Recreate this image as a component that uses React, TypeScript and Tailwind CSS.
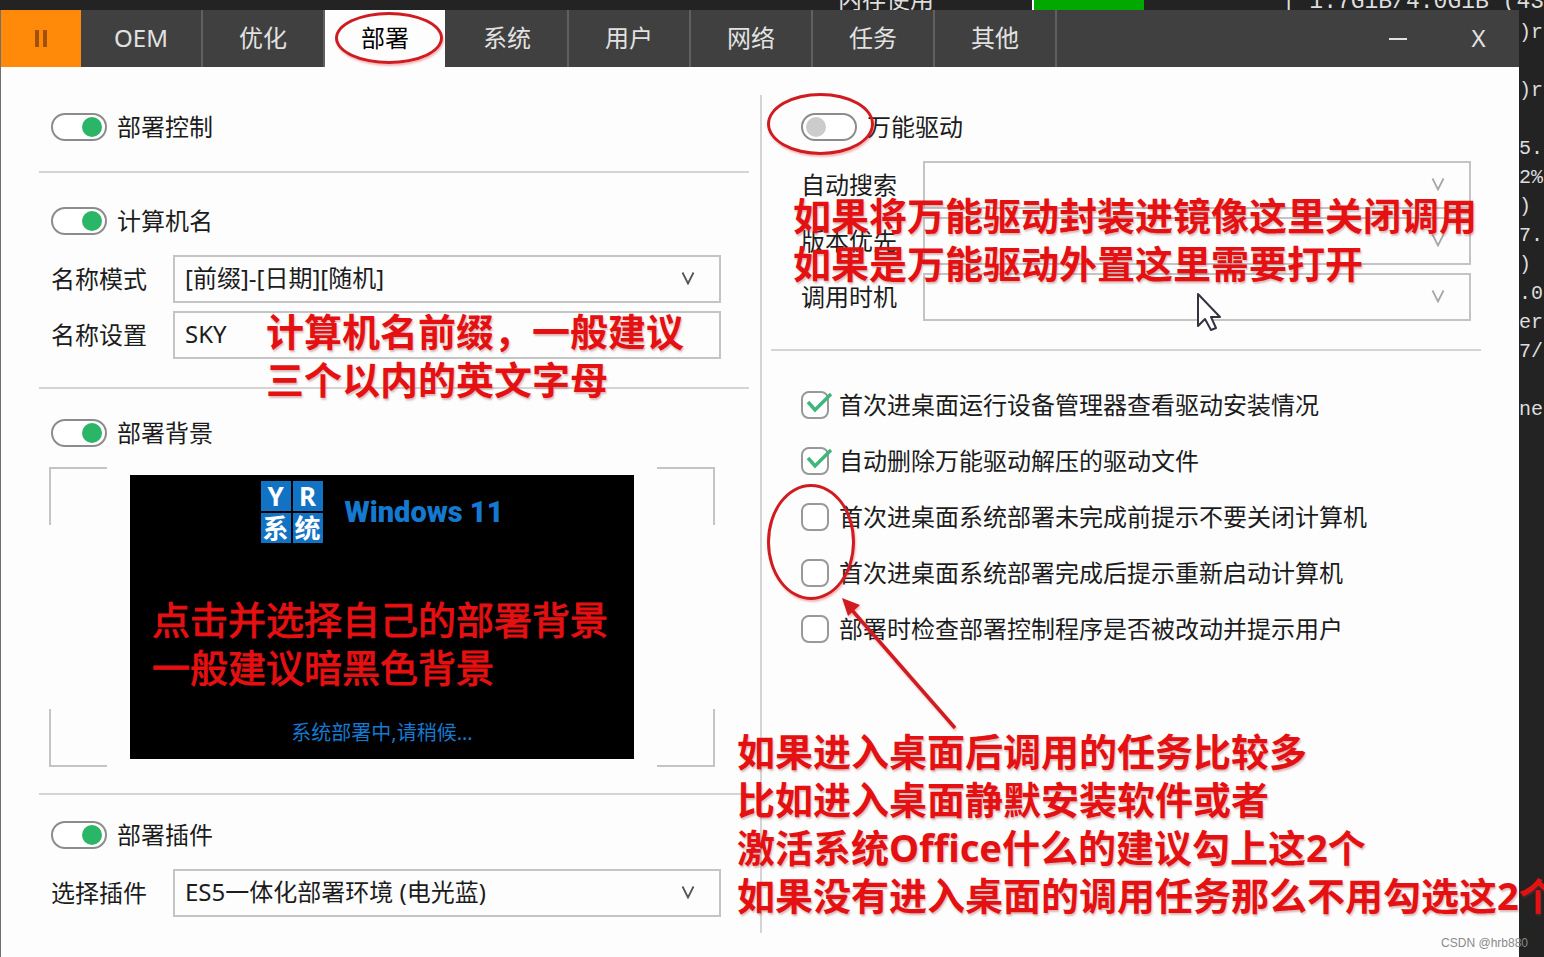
import type { ReactNode } from "react"

const tabs = ["OEM", "优化", "部署", "系统", "用户", "网络", "任务", "其他"]

const terminalLines = [")r", "", ")r", "", "5.", "2%", ")", "7.", ")", ".0", "er", "7/", "", "ne"]

const options = [
  { id: "device-manager", label: "首次进桌面运行设备管理器查看驱动安装情况", checked: true },
  { id: "remove-drivers", label: "自动删除万能驱动解压的驱动文件", checked: true },
  { id: "warn-shutdown", label: "首次进桌面系统部署未完成前提示不要关闭计算机", checked: false },
  { id: "prompt-restart", label: "首次进桌面系统部署完成后提示重新启动计算机", checked: false },
  { id: "verify-program", label: "部署时检查部署控制程序是否被改动并提示用户", checked: false },
]

function Toggle({ id, label, on = false }: { id: string; label: string; on?: boolean }) {
  return (
    <div className="flex h-9 items-center gap-2.5 pl-3">
      <input
        id={id}
        type="checkbox"
        role="switch"
        defaultChecked={on}
        className="flex h-7 w-14 shrink-0 appearance-none items-center rounded-full border-2 border-[#8c8c8c] bg-white px-[3px] before:size-5 before:rounded-full before:bg-[#cccccc] before:content-[''] checked:justify-end checked:before:bg-[#2bb566]"
      />
      <label htmlFor={id}>{label}</label>
    </div>
  )
}

function Field({ id, label, children }: { id: string; label: string; children: ReactNode }) {
  return (
    <div className="flex h-12 items-center pl-3">
      <label htmlFor={id} className="w-[122px] shrink-0">
        {label}
      </label>
      {children}
    </div>
  )
}

function SelectBox({ id, value, disabled = false }: { id: string; value?: string; disabled?: boolean }) {
  return (
    <div className="relative h-12 min-w-0 flex-1">
      <select
        id={id}
        disabled={disabled}
        className="h-full w-full appearance-none border-2 border-[#c4c4c4] bg-[#fdfdfd] px-2.5 pb-0.5"
      >
        <option>{value}</option>
      </select>
      <svg
        viewBox="0 0 14 14"
        className={`pointer-events-none absolute top-4 right-6.5 size-3.5 ${disabled ? "text-[#a8a8a8]" : "text-[#555555]"}`}
      >
        <path d="M1.5 1.5 7 12.5 12.5 1.5" fill="none" stroke="currentColor" strokeWidth="1.8" />
      </svg>
    </div>
  )
}

function Note({ className, children }: { className: string; children: ReactNode }) {
  return (
    <p className={`pointer-events-none absolute z-20 text-[38px] leading-12 whitespace-nowrap text-[#e41012] ${className}`}>
      {children}
    </p>
  )
}

/* Hand-drawn style ring around a control */
function Ring({ className }: { className: string }) {
  return (
    <span
      className={`pointer-events-none absolute z-20 rounded-[50%] border-[3px] border-[#d01c20] shadow-[1px_2px_2px_rgba(220,60,60,0.35)] ${className}`}
    />
  )
}

function TitleBar() {
  return (
    <header className="flex h-[57px] bg-[#404040] text-[#e2e2e2]">
      <button type="button" aria-label="暂停" className="flex w-20 items-center justify-center bg-[#ff8a0a]">
        <svg viewBox="0 0 12 17" className="h-[17px] w-3">
          <path d="M0 0h4v17H0zM8 0h4v17H8z" fill="#a3500c" />
        </svg>
      </button>
      <nav className="flex">
        {tabs.map((tab) => {
          const active = tab === "部署"
          return (
            <button
              key={tab}
              type="button"
              className={`relative w-[122px] border-r-2 pb-0.5 ${active ? "border-[#404040] bg-[#fdfdfd] text-black" : "border-[#606060]"}`}
            >
              {tab}
              {active && <Ring className="top-0.5 left-2.5 h-[52px] w-[108px]" />}
            </button>
          )
        })}
      </nav>
      <div className="ml-auto flex">
        <button type="button" aria-label="最小化" className="flex w-[81px] items-center justify-center">
          <span className="h-0.5 w-[18px] bg-[#e2e2e2]" />
        </button>
        <button type="button" aria-label="关闭" className="w-[81px] pb-0.5">
          X
        </button>
      </div>
    </header>
  )
}

function Preview() {
  return (
    <div className="relative mr-[34px] ml-2.5 flex h-[300px] items-center justify-center">
      <span className="absolute top-0 left-0 size-[58px] border-t-2 border-l-2 border-[#c4c4c4]" />
      <span className="absolute top-0 right-0 size-[58px] border-t-2 border-r-2 border-[#c4c4c4]" />
      <span className="absolute bottom-0 left-0 size-[58px] border-b-2 border-l-2 border-[#c4c4c4]" />
      <span className="absolute right-0 bottom-0 size-[58px] border-r-2 border-b-2 border-[#c4c4c4]" />

      <div className="relative flex h-[284px] w-[504px] flex-col items-center bg-black pt-1.5 pb-3 text-[#1479cf]">
        <div className="flex items-center gap-5.5">
          <div className="grid grid-cols-2 gap-0.5 text-center text-[26px] leading-[30px] font-bold text-white">
            {["Y", "R", "系", "统"].map((char) => (
              <span key={char} className="size-[30px] bg-[#1272c4]">
                {char}
              </span>
            ))}
          </div>
          <span className="font-[Roboto,sans-serif] text-[29px] leading-9 font-black">Windows 11</span>
        </div>
        <p className="mt-auto text-[20px] leading-7">系统部署中,请稍候...</p>
        <Note className="top-[120px] left-[22px] [-webkit-text-stroke:1px_#e41012]">
          点击并选择自己的部署背景
          <br />
          一般建议暗黑色背景
        </Note>
      </div>
    </div>
  )
}

export default function App() {
  return (
    <div className="relative flex min-h-screen flex-col overflow-hidden bg-[#232323] font-['Noto_Sans','Noto_Sans_CJK_SC',sans-serif] text-[24px] leading-9 text-[#1c1c1c]">
      {/* Console behind the window, only its last line shows */}
      <div className="flex h-2.5 items-end overflow-hidden pl-[838px] font-['Liberation_Mono','Noto_Sans_CJK_SC',monospace] text-[23px] leading-4 whitespace-pre text-[#dddddd]">
        <span className="w-[196px] text-[24px]">内存使用</span>
        <span className="h-full w-[113px] border-l-2 border-white bg-[#00a800]" />
        <span className="pl-[138px]">| 1.7GiB/4.0GiB (43</span>
      </div>

      <div className="flex flex-1">
        <div className="flex min-w-0 flex-1 flex-col border-l border-[#707070] bg-[#fdfdfd]">
          <TitleBar />

          <main className="grid flex-1 grid-cols-2 pt-7 pb-6">
            <div className="pr-[11px] pl-[38px]">
              <section className="border-b-2 border-[#d4d4d4] pt-3.5 pb-6.5">
                <Toggle id="deploy-control" label="部署控制" on />
              </section>

              <section className="relative border-b-2 border-[#d4d4d4] pt-7.5 pb-7">
                <Toggle id="computer-name" label="计算机名" on />
                <div className="mt-4 flex flex-col gap-2 pr-7">
                  <Field id="name-mode" label="名称模式">
                    <SelectBox id="name-mode" value="[前缀]-[日期][随机]" />
                  </Field>
                  <Field id="name-prefix" label="名称设置">
                    <input
                      id="name-prefix"
                      type="text"
                      defaultValue="SKY"
                      className="h-12 min-w-0 flex-1 border-2 border-[#c4c4c4] bg-[#fdfdfd] px-2.5 pb-1"
                    />
                  </Field>
                </div>
                <Note className="top-[134px] left-[227px] font-bold text-shadow-[1px_2px_2px_rgba(150,60,60,0.35)]">
                  计算机名前缀，一般建议
                  <br />
                  三个以内的英文字母
                </Note>
              </section>

              <section className="border-b-2 border-[#d4d4d4] pt-6.5 pb-6.5">
                <Toggle id="deploy-background" label="部署背景" on />
                <div className="mt-4">
                  <Preview />
                </div>
              </section>

              <section className="pt-5.5">
                <Toggle id="deploy-plugin" label="部署插件" on />
                <div className="mt-4 pr-7">
                  <Field id="plugin" label="选择插件">
                    <SelectBox id="plugin" value="ES5一体化部署环境 (电光蓝)" />
                  </Field>
                </div>
              </section>
            </div>

            <div className="border-l-2 border-[#d4d4d4] pr-[38px] pl-[9px]">
              <section className="relative border-b-2 border-[#d4d4d4] pt-3.5 pb-7 pl-[18px]">
                <Toggle id="universal-driver" label="万能驱动" />
                <div className="mt-4 flex flex-col gap-2 pr-2.5">
                  <Field id="auto-search" label="自动搜索">
                    <SelectBox id="auto-search" disabled />
                  </Field>
                  <Field id="version-first" label="版本优先">
                    <SelectBox id="version-first" disabled />
                  </Field>
                  <Field id="call-timing" label="调用时机">
                    <SelectBox id="call-timing" disabled />
                  </Field>
                </div>

                <Ring className="-top-0.5 -left-1 h-[62px] w-[107px]" />
                <Note className="top-24 left-[22px] font-bold text-shadow-[1px_2px_2px_rgba(150,60,60,0.35)]">
                  如果将万能驱动封装进镜像这里关闭调用
                  <br />
                  如果是万能驱动外置这里需要打开
                </Note>
                <svg viewBox="0 0 26 40" className="absolute top-[197px] left-[425px] h-10 w-[26px]">
                  <path
                    d="M2 2v32l7-7 6 11 5-2-5-11h9z"
                    fill="#ffffff"
                    stroke="#333340"
                    strokeWidth="2"
                    strokeLinejoin="round"
                  />
                </svg>
              </section>

              <section className="relative flex flex-col gap-5 pt-9 pl-[30px]">
                {options.map((option) => (
                  <div key={option.id} className="relative flex h-9 items-center gap-2.5 whitespace-nowrap">
                    <input
                      id={option.id}
                      type="checkbox"
                      defaultChecked={option.checked}
                      className="peer size-7 shrink-0 appearance-none rounded-lg border-2 border-[#999999] bg-white"
                    />
                    <svg
                      viewBox="0 0 36 36"
                      className="pointer-events-none absolute top-0 left-0 hidden size-9 peer-checked:block"
                    >
                      <path d="M7 15l7 8L30 7" fill="none" stroke="#3fb67b" strokeWidth="3.5" />
                    </svg>
                    <label htmlFor={option.id}>{option.label}</label>
                  </div>
                ))}

                <Ring className="top-[133px] -left-1 h-[116px] w-[88px]" />
                <svg
                  viewBox="0 0 124 140"
                  className="pointer-events-none absolute top-[244px] left-[68px] z-20 h-[140px] w-[124px] drop-shadow-[1px_2px_1px_rgba(220,60,60,0.35)]"
                >
                  <path d="M12 14 116 133" stroke="#d01c20" strokeWidth="3.5" />
                  <path d="M3 3l18 7-12 11z" fill="#d01c20" />
                </svg>
                <Note className="top-[376px] -left-[34px] font-bold text-shadow-[1px_2px_2px_rgba(150,60,60,0.35)]">
                  如果进入桌面后调用的任务比较多
                  <br />
                  比如进入桌面静默安装软件或者
                  <br />
                  激活系统Office什么的建议勾上这2个
                  <br />
                  如果没有进入桌面的调用任务那么不用勾选这2个
                </Note>
              </section>
            </div>
          </main>
        </div>

        <aside className="w-[25px] pt-2 font-['Liberation_Mono',monospace] text-[20px] leading-[29px] text-[#dddddd]">
          {terminalLines.map((line, i) => (
            <div key={i} className="h-[29px] whitespace-pre">
              {line}
            </div>
          ))}
        </aside>
      </div>

      <span className="absolute right-4 bottom-1.5 z-30 font-['Liberation_Sans',sans-serif] text-[12px] leading-4 text-[#8a8a8a]">
        CSDN @hrb880
      </span>
    </div>
  )
}
